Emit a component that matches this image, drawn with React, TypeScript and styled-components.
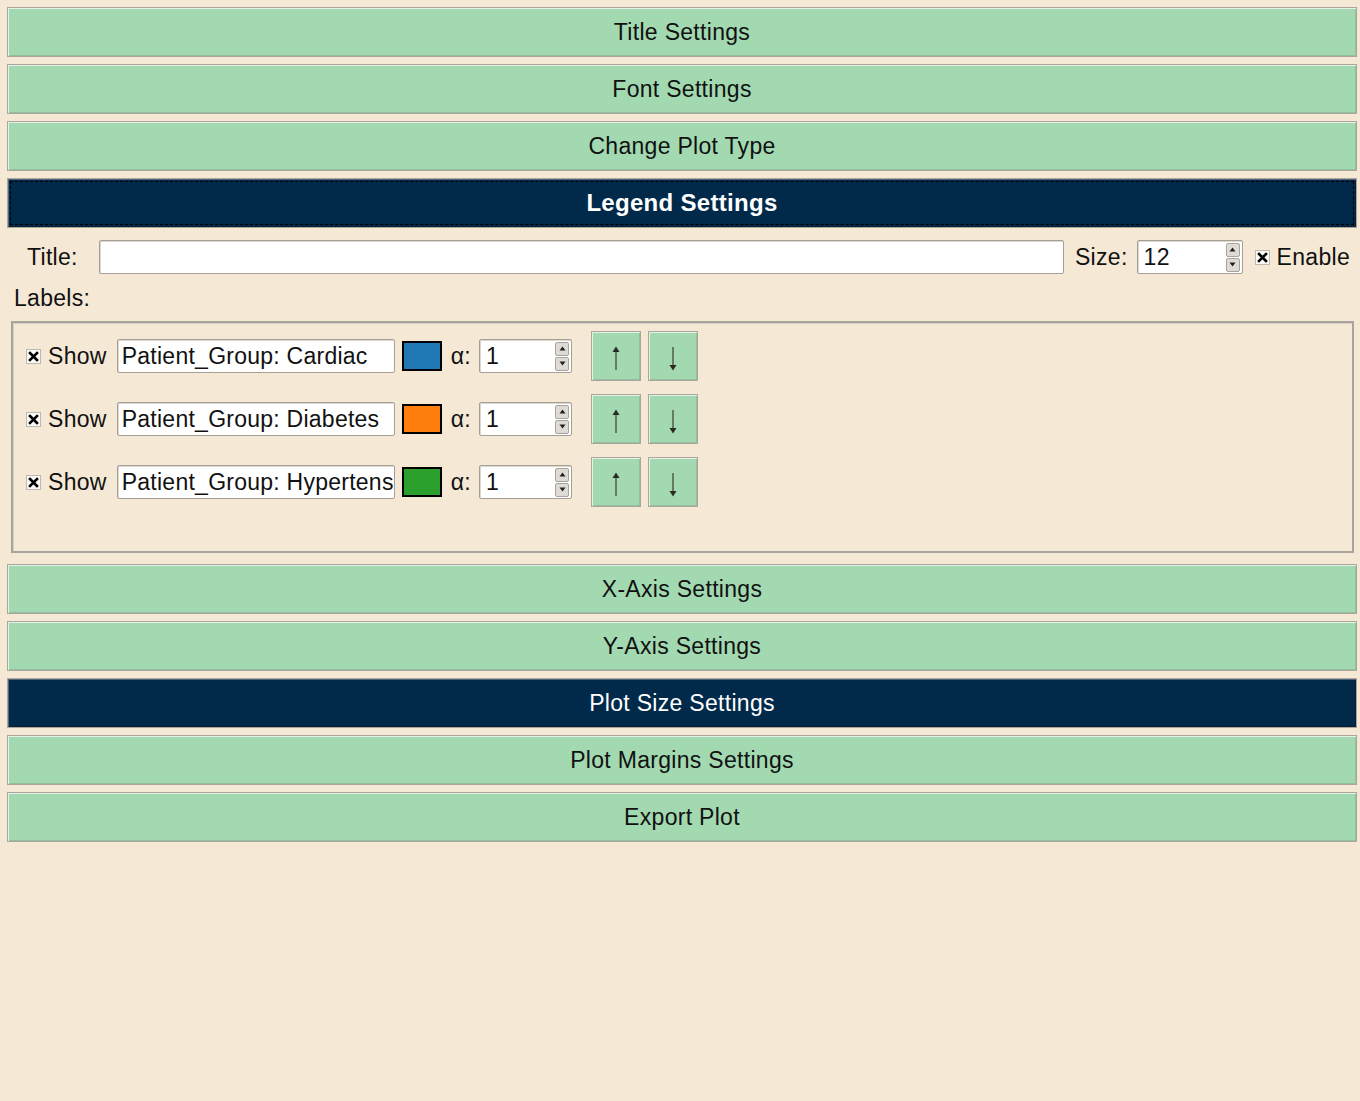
import React from 'react'
import styled, { createGlobalStyle, css } from 'styled-components'

const GlobalStyle = createGlobalStyle`
  html, body {
    margin: 0;
    padding: 0;
    background: #f5e9d5;
  }
  body {
    font-family: "Liberation Sans", Arial, sans-serif;
    color: #111;
    letter-spacing: 0.3px;
  }
`

const Page = styled.div`
  min-height: 1101px;
  padding: 7px 3px 0 7px;
  box-sizing: border-box;
  display: flex;
  flex-direction: column;
  gap: 7px;
`

const SectionBar = styled.div<{ $active?: boolean; $focused?: boolean }>`
  height: 50px;
  box-sizing: border-box;
  display: flex;
  align-items: center;
  justify-content: center;
  font-size: 23px;
  background: #a2d9b1;
  color: #111;
  border: 1px solid #aba59c;
  box-shadow: inset 1px 1px 0 #e3f3e7, inset -1px -1px 0 #93bfa0;
  ${(p) =>
    p.$active &&
    css`
      background: #012a4a;
      color: #fff;
      box-shadow: inset 1px 1px 0 #50677c, inset -1px -1px 0 #0a1f33;
    `}
  ${(p) =>
    p.$focused &&
    css`
      font-weight: bold;
      font-size: 24px;
      outline: 1px dashed #000;
      outline-offset: -4px;
    `}
`

const LegendPanel = styled.div`
  padding: 5px 3px 4px 4px;
  display: flex;
  flex-direction: column;
`

const TitleRow = styled.div`
  display: flex;
  align-items: center;
  height: 34px;
  padding: 0 4px 0 16px;
`

const Label = styled.span<{ $gap?: number }>`
  font-size: 23px;
  white-space: nowrap;
  margin-right: ${(p) => p.$gap ?? 0}px;
`

const fieldBorder = css`
  box-sizing: border-box;
  background: #fff;
  border: 1px solid #a59f96;
  border-radius: 2px;
  box-shadow: inset 1px 1px 0 #dcd8d0;
`

const TextField = styled.div<{ $width?: number }>`
  ${fieldBorder}
  height: 34px;
  ${(p) => (p.$width ? `width: ${p.$width}px;` : 'flex: 1;')}
  display: flex;
  align-items: center;
  padding-left: 4px;
  font-size: 23px;
  letter-spacing: 0.25px;
  white-space: nowrap;
  overflow: hidden;
`

const Spin = styled.div<{ $width: number }>`
  ${fieldBorder}
  width: ${(p) => p.$width}px;
  height: 34px;
  display: flex;
  align-items: center;
  justify-content: space-between;
  padding: 0 2px 0 6px;
  font-size: 23px;
`

const SpinArrows = styled.div`
  display: flex;
  flex-direction: column;
  gap: 1px;
`

const SpinArrow = styled.div`
  width: 14px;
  height: 14px;
  box-sizing: border-box;
  border: 1px solid #a8a49c;
  border-radius: 2px;
  background: #dedbd4;
  display: flex;
  align-items: center;
  justify-content: center;
`

const CheckBox = styled.div<{ $gap: number }>`
  width: 15px;
  height: 15px;
  box-sizing: border-box;
  border: 1px solid #bdb8b0;
  background: #fbfaf7;
  display: flex;
  align-items: center;
  justify-content: center;
  margin-right: ${(p) => p.$gap}px;
`

const LabelsHeading = styled.div`
  font-size: 23px;
  padding: 11px 0 10px 3px;
  line-height: 26px;
`

const LabelsBox = styled.div`
  border: 2px solid #a8a49c;
  box-shadow: inset 1px 1px 0 #d6d1c8;
  padding: 8px 13px 44px 13px;
  display: flex;
  flex-direction: column;
  gap: 13px;
`

const LabelRow = styled.div`
  display: flex;
  align-items: center;
  height: 50px;
`

const Swatch = styled.div<{ $color: string }>`
  width: 40px;
  height: 30px;
  box-sizing: border-box;
  border: 2px solid #000;
  background: ${(p) => p.$color};
  margin: 0 9px 0 7px;
`

const MoveButton = styled.div`
  width: 50px;
  height: 50px;
  box-sizing: border-box;
  background: #a2d9b1;
  border: 1px solid #aba59c;
  box-shadow: inset 1px 1px 0 #e3f3e7, inset -1px -1px 0 #93bfa0;
  display: flex;
  align-items: center;
  justify-content: center;
  margin-right: 7px;
`

const Tri = ({ up }: { up?: boolean }) => (
  <svg width="7" height="5" viewBox="0 0 7 5">
    <path d={up ? 'M0.5 4.5 L3.5 0.5 L6.5 4.5 Z' : 'M0.5 0.5 L3.5 4.5 L6.5 0.5 Z'} fill="#222" />
  </svg>
)

const Cross = () => (
  <svg width="11" height="11" viewBox="0 0 11 11">
    <path d="M2 2 L9 9 M9 2 L2 9" stroke="#000" strokeWidth="2.6" strokeLinecap="square" />
  </svg>
)

const Arrow = ({ up }: { up?: boolean }) => (
  <svg
    width="12"
    height="26"
    viewBox="0 0 12 26"
    style={{ transform: up ? 'translateY(2px)' : 'translateY(3px) rotate(180deg)' }}
  >
    <path d="M6 3 L6 25" stroke="#55664a" strokeWidth="1.6" />
    <path d="M2.5 7 L6 1.5 L9.5 7 Z" fill="#2a2a22" />
  </svg>
)

function Spinner({ value, width }: { value: string; width: number }) {
  return (
    <Spin $width={width}>
      <span>{value}</span>
      <SpinArrows>
        <SpinArrow>
          <Tri up />
        </SpinArrow>
        <SpinArrow>
          <Tri />
        </SpinArrow>
      </SpinArrows>
    </Spin>
  )
}

const labels = [
  { name: 'Patient_Group: Cardiac', color: '#1f77b4' },
  { name: 'Patient_Group: Diabetes', color: '#ff7f0e' },
  { name: 'Patient_Group: Hypertens', color: '#2ca02c' },
]

function App() {
  return (
    <Page>
      <GlobalStyle />
      <SectionBar>Title Settings</SectionBar>
      <SectionBar>Font Settings</SectionBar>
      <SectionBar>Change Plot Type</SectionBar>
      <SectionBar $active $focused>
        Legend Settings
      </SectionBar>
      <LegendPanel>
        <TitleRow>
          <Label $gap={21}>Title:</Label>
          <TextField />
          <Label style={{ marginLeft: 11 }} $gap={9}>
            Size:
          </Label>
          <Spinner value="12" width={106} />
          <span style={{ width: 12 }} />
          <CheckBox $gap={7}>
            <Cross />
          </CheckBox>
          <Label>Enable</Label>
        </TitleRow>
        <LabelsHeading>Labels:</LabelsHeading>
        <LabelsBox>
          {labels.map((l) => (
            <LabelRow key={l.name}>
              <CheckBox $gap={7}>
                <Cross />
              </CheckBox>
              <Label $gap={10}>Show</Label>
              <TextField $width={278}>{l.name}</TextField>
              <Swatch $color={l.color} />
              <Label $gap={8}>α:</Label>
              <Spinner value="1" width={93} />
              <span style={{ width: 19 }} />
              <MoveButton>
                <Arrow up />
              </MoveButton>
              <MoveButton>
                <Arrow />
              </MoveButton>
            </LabelRow>
          ))}
        </LabelsBox>
      </LegendPanel>
      <SectionBar>X-Axis Settings</SectionBar>
      <SectionBar>Y-Axis Settings</SectionBar>
      <SectionBar $active>Plot Size Settings</SectionBar>
      <SectionBar>Plot Margins Settings</SectionBar>
      <SectionBar>Export Plot</SectionBar>
    </Page>
  )
}

export default App
